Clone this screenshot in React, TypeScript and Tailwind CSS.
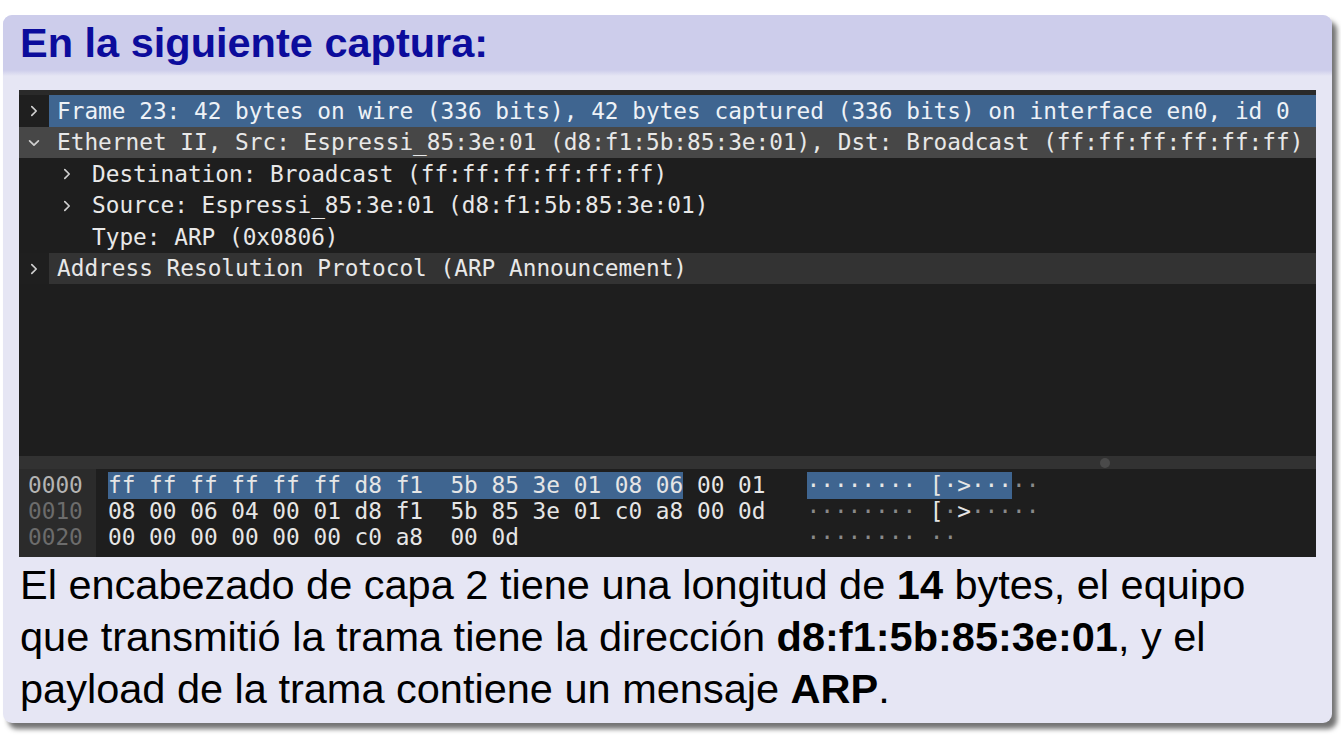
import React from "react";

const Right = () => (
  <svg width="8" height="12" viewBox="0 0 8 12" className="shrink-0">
    <path d="M1.8 1.6 L6.2 6 L1.8 10.4" fill="none" stroke="#cfcfcf" strokeWidth="1.7" strokeLinecap="round" strokeLinejoin="round" />
  </svg>
);
const Down = () => (
  <svg width="12" height="8" viewBox="0 0 12 8" className="shrink-0">
    <path d="M1.6 1.8 L6 6.2 L10.4 1.8" fill="none" stroke="#cfcfcf" strokeWidth="1.7" strokeLinecap="round" strokeLinejoin="round" />
  </svg>
);

function TopRow({ arrow, text, rowBg, contentBg, h }: { arrow: "r" | "d"; text: string; rowBg: string; contentBg: string; h: string }) {
  return (
    <div className={`flex ${h} items-stretch ${rowBg}`}>
      <div className="w-[30px] flex items-center justify-center">{arrow === "r" ? <Right /> : <Down />}</div>
      <div className={`flex-1 flex items-center pl-[8px] whitespace-pre ${contentBg}`}>{text}</div>
    </div>
  );
}

function ChildRow({ arrow, text, h }: { arrow: boolean; text: string; h: string }) {
  return (
    <div className={`flex ${h} items-center pl-[44px] whitespace-pre`}>
      <div className="w-[8px] flex items-center">{arrow ? <Right /> : null}</div>
      <div className="ml-[21px]">{text}</div>
    </div>
  );
}

export default function App() {
  const hl = "bg-[#3f6590] inline-block leading-[27px]";
  return (
    <div className="w-[1341px] h-[741px] bg-white overflow-hidden pt-[15px] pl-[3px]">
      <div className="w-[1329px] rounded-[9px] bg-[#e6e6f4] shadow-[5px_6px_5px_rgba(0,0,0,0.55)] overflow-hidden">
        <div className="h-[55px] bg-[#cdcdeb] flex items-center pl-[17px]">
          <div className="font-['Liberation_Sans',Arial,sans-serif] font-bold text-[41.5px] leading-none text-[#0c0c9c]">
            En la siguiente captura:
          </div>
        </div>
        <div className="h-[6px] bg-linear-to-b from-[#cdcdeb] to-[#e6e6f4]" />
        <div className="px-4 pt-[14px]">
          <div className="h-[467px] bg-[#1e1e1e] flex flex-col font-['DejaVu_Sans_Mono',monospace] text-[22.75px] text-[#e8e8e8]">
            <div className="h-[5px] bg-[#2a2a2a]" />
            <TopRow
              h="h-[32px]"
              arrow="r"
              rowBg="bg-[#1f1f1f]"
              contentBg="bg-[#3f6590] text-[#eef2f7]"
              text="Frame 23: 42 bytes on wire (336 bits), 42 bytes captured (336 bits) on interface en0, id 0"
            />
            <TopRow
              h="h-[31px]"
              arrow="d"
              rowBg="bg-[#474747]"
              contentBg=""
              text="Ethernet II, Src: Espressi_85:3e:01 (d8:f1:5b:85:3e:01), Dst: Broadcast (ff:ff:ff:ff:ff:ff)"
            />
            <ChildRow h="h-[32px]" arrow text="Destination: Broadcast (ff:ff:ff:ff:ff:ff)" />
            <ChildRow h="h-[31px]" arrow text="Source: Espressi_85:3e:01 (d8:f1:5b:85:3e:01)" />
            <ChildRow h="h-[32px]" arrow={false} text="Type: ARP (0x0806)" />
            <TopRow
              h="h-[31px]"
              arrow="r"
              rowBg="bg-[#1f1f1f]"
              contentBg="bg-[#333333]"
              text="Address Resolution Protocol (ARP Announcement)"
            />
            <div className="flex-1" />
            <div className="h-[13px] bg-[#323232] relative">
              <div className="absolute left-[1081px] top-[2px] w-[10px] h-[10px] rounded-full bg-[#4a4a4a]" />
            </div>
            <div className="h-[88px] flex">
              <div className="w-[77px] bg-[#2b2b2b] pl-[9px] pt-[3px]">
                <div className="h-[26px] flex items-center text-[#b4b4b4]">0000</div>
                <div className="h-[26px] flex items-center text-[#6c6c6c]">0010</div>
                <div className="h-[26px] flex items-center text-[#6c6c6c]">0020</div>
              </div>
              <div className="pl-[12px] pt-[3px] whitespace-pre text-[#e6e6e6]">
                <div className="h-[26px] flex items-center">
                  <span className={hl}>ff ff ff ff ff ff d8 f1  5b 85 3e 01 08 06</span>
                  <span> 00 01   </span>
                  <span className={hl}>········ [·&gt;···</span>
                  <span className="text-[#8a8a8a]">··</span>
                </div>
                <div className="h-[26px] flex items-center">
                  <span>08 00 06 04 00 01 d8 f1  5b 85 3e 01 c0 a8 00 0d   </span>
                  <span className="text-[#8a8a8a]">········ </span>
                  <span>[</span>
                  <span className="text-[#8a8a8a]">·</span>
                  <span>&gt;</span>
                  <span className="text-[#8a8a8a]">·····</span>
                </div>
                <div className="h-[26px] flex items-center">
                  <span>00 00 00 00 00 00 c0 a8  00 0d                     </span>
                  <span className="text-[#8a8a8a]">········ ··</span>
                </div>
              </div>
            </div>
          </div>
        </div>
        <div className="pl-[17px] pt-[2px] pb-[8px] font-['Liberation_Sans',Arial,sans-serif] text-[41.5px] leading-[52px] text-black whitespace-nowrap">
          <div>
            El encabezado de capa 2 tiene una longitud de <b>14</b> bytes, el equipo
          </div>
          <div>
            que transmitió la trama tiene la dirección <b>d8:f1:5b:85:3e:01</b>, y el
          </div>
          <div>
            payload de la trama contiene un mensaje <b>ARP</b>.
          </div>
        </div>
      </div>
    </div>
  );
}
